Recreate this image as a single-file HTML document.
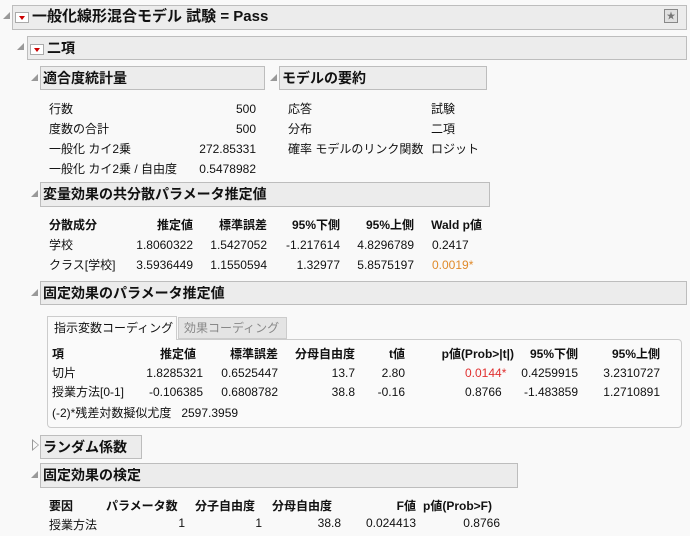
<!DOCTYPE html><html><head><meta charset="utf-8"><style>
body{margin:0;width:690px;height:536px;background:#f9f9f9;font-family:"Liberation Sans","Noto Sans CJK JP",sans-serif;font-size:12px;color:#111;position:relative;overflow:hidden}
.a{position:absolute;white-space:nowrap}
.h{position:absolute;background:#ececec;border:1px solid #bdbdbd;box-sizing:border-box;font-weight:bold;font-size:14px;padding-left:2px;line-height:22px}
.tri{position:absolute;width:0;height:0;border-left:7px solid transparent;border-bottom:7px solid #999}
.r{text-align:right}
.b{font-weight:bold}
.red{width:14px;height:11px;border:1px solid #aaa;background:#fff;display:inline-block;vertical-align:middle;position:relative;margin-right:3px;box-sizing:border-box}
.red:after{content:"";position:absolute;left:3px;top:3px;border-left:3px solid transparent;border-right:3px solid transparent;border-top:4px solid #c00}
</style></head><body>
<div class="tri" style="left:3px;top:12px"></div>
<div class="h" style="left:12px;top:5px;width:675px;height:25px;font-size:15px"><span class="red"></span>一般化線形混合モデル 試験 = Pass</div>
<div class="a" style="left:664px;top:9px;width:12px;height:12px;border:1px solid #888;background:#e0e0e0;font-size:9px;line-height:12px;text-align:center;color:#777">★</div>
<div class="tri" style="left:17px;top:43px"></div>
<div class="h" style="left:27px;top:36px;width:660px;height:24px"><span class="red"></span>二項</div>
<div class="tri" style="left:31px;top:74px"></div>
<div class="h" style="left:40px;top:66px;width:225px;height:24px">適合度統計量</div>
<div class="tri" style="left:270px;top:74px"></div>
<div class="h" style="left:279px;top:66px;width:208px;height:24px">モデルの要約</div>
<div class="a" style="left:49px;top:99px;line-height:20px">行数<br>度数の合計<br>一般化 カイ2乗<br>一般化 カイ2乗 / 自由度</div>
<div class="a r" style="left:190px;top:99px;width:66px;line-height:20px">500<br>500<br>272.85331<br>0.5478982</div>
<div class="a" style="left:288px;top:99px;line-height:20px">応答<br>分布<br>確率 モデルのリンク関数</div>
<div class="a" style="left:431px;top:99px;line-height:20px">試験<br>二項<br>ロジット</div>
<div class="tri" style="left:31px;top:190px"></div>
<div class="h" style="left:40px;top:182px;width:450px;height:25px">変量効果の共分散パラメータ推定値</div>
<div class="a b" style="left:49px;top:216px">分散成分</div>
<div class="a b r" style="left:130px;top:216px;width:63px">推定値</div>
<div class="a b r" style="left:200px;top:216px;width:67px">標準誤差</div>
<div class="a b r" style="left:270px;top:216px;width:70px">95%下側</div>
<div class="a b r" style="left:340px;top:216px;width:74px">95%上側</div>
<div class="a b r" style="left:420px;top:216px;width:62px">Wald p値</div>
<div class="a" style="left:49px;top:235px;line-height:20px">学校<br>クラス[学校]</div>
<div class="a r" style="left:130px;top:235px;width:63px;line-height:20px">1.8060322<br>3.5936449</div>
<div class="a r" style="left:200px;top:235px;width:67px;line-height:20px">1.5427052<br>1.1550594</div>
<div class="a r" style="left:270px;top:235px;width:70px;line-height:20px">-1.217614<br>1.32977</div>
<div class="a r" style="left:340px;top:235px;width:74px;line-height:20px">4.8296789<br>5.8575197</div>
<div class="a" style="left:432px;top:235px;line-height:20px">0.2417<br><span style="color:#e08a2a">0.0019*</span></div>
<div class="tri" style="left:31px;top:289px"></div>
<div class="h" style="left:40px;top:281px;width:647px;height:24px">固定効果のパラメータ推定値</div>
<div class="a" style="left:47px;top:339px;width:635px;height:89px;border:1px solid #ccc;border-radius:0 4px 4px 4px;background:#fafafa;box-sizing:border-box"></div>
<div class="a" style="left:47px;top:316px;width:130px;height:24px;border:1px solid #ccc;border-bottom:none;background:#fafafa;box-sizing:border-box;line-height:22px;padding-left:6px">指示変数コーディング</div>
<div class="a" style="left:178px;top:317px;width:109px;height:22px;border:1px solid #ccc;background:#e4e4e4;box-sizing:border-box;line-height:20px;padding-left:5px;color:#888">効果コーディング</div>
<div class="a b" style="left:52px;top:345px">項</div>
<div class="a b r" style="left:140px;top:345px;width:56px">推定値</div>
<div class="a b r" style="left:210px;top:345px;width:68px">標準誤差</div>
<div class="a b r" style="left:285px;top:345px;width:70px">分母自由度</div>
<div class="a b r" style="left:360px;top:345px;width:45px">t値</div>
<div class="a b r" style="left:410px;top:345px;width:104px">p値(Prob&gt;|t|)</div>
<div class="a b r" style="left:520px;top:345px;width:58px">95%下側</div>
<div class="a b r" style="left:590px;top:345px;width:70px">95%上側</div>
<div class="a" style="left:52px;top:364px;line-height:19px">切片<br>授業方法[0-1]</div>
<div class="a r" style="left:130px;top:364px;width:73px;line-height:19px">1.8285321<br>-0.106385</div>
<div class="a r" style="left:200px;top:364px;width:78px;line-height:19px">0.6525447<br>0.6808782</div>
<div class="a r" style="left:300px;top:364px;width:55px;line-height:19px">13.7<br>38.8</div>
<div class="a r" style="left:360px;top:364px;width:45px;line-height:19px">2.80<br>-0.16</div>
<div class="a" style="left:465px;top:364px;line-height:19px"><span style="color:#e03030">0.0144*</span><br>0.8766</div>
<div class="a r" style="left:510px;top:364px;width:68px;line-height:19px">0.4259915<br>-1.483859</div>
<div class="a r" style="left:590px;top:364px;width:70px;line-height:19px">3.2310727<br>1.2710891</div>
<div class="a" style="left:52px;top:404px">(-2)*残差対数擬似尤度 &nbsp; 2597.3959</div>
<div class="a" style="left:32px;top:439px;border-top:6px solid transparent;border-bottom:6px solid transparent;border-left:7px solid #999;width:0;height:0"></div>
<div class="a" style="left:33px;top:441px;border-top:4px solid transparent;border-bottom:4px solid transparent;border-left:5px solid #f9f9f9;width:0;height:0"></div>
<div class="h" style="left:40px;top:435px;width:102px;height:24px">ランダム係数</div>
<div class="tri" style="left:31px;top:471px"></div>
<div class="h" style="left:40px;top:463px;width:478px;height:25px">固定効果の検定</div>
<div class="a b" style="left:49px;top:497px">要因</div>
<div class="a b" style="left:106px;top:497px">パラメータ数</div>
<div class="a b" style="left:195px;top:497px">分子自由度</div>
<div class="a b" style="left:272px;top:497px">分母自由度</div>
<div class="a b r" style="left:360px;top:497px;width:56px">F値</div>
<div class="a b" style="left:423px;top:497px">p値(Prob&gt;F)</div>
<div class="a" style="left:49px;top:516px">授業方法</div>
<div class="a r" style="left:140px;top:516px;width:45px">1</div>
<div class="a r" style="left:220px;top:516px;width:42px">1</div>
<div class="a r" style="left:290px;top:516px;width:51px">38.8</div>
<div class="a r" style="left:360px;top:516px;width:56px">0.024413</div>
<div class="a r" style="left:440px;top:516px;width:60px">0.8766</div>
</body></html>
